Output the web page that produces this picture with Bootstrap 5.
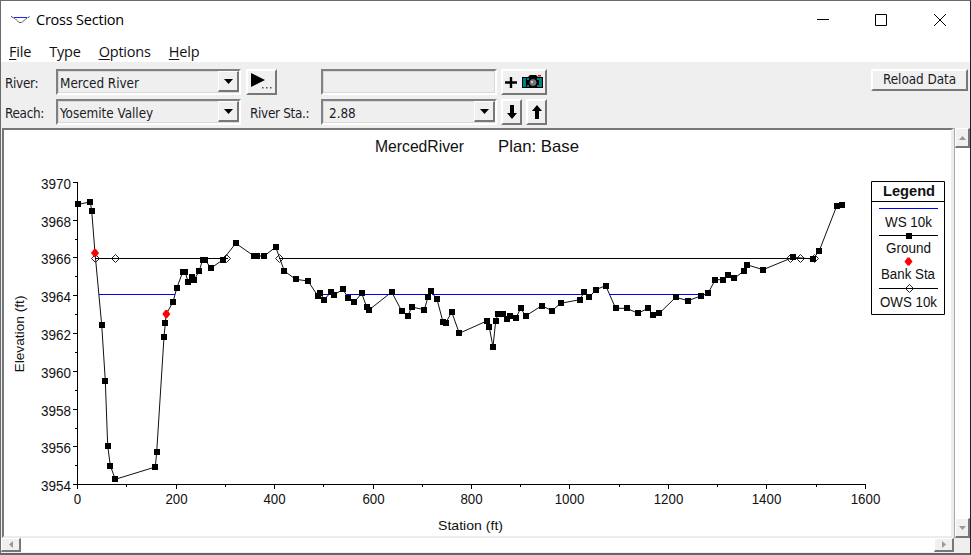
<!DOCTYPE html>
<html lang="en">
<head>
<meta charset="utf-8">
<title>Cross Section</title>
<meta name="viewport" content="width=device-width, initial-scale=1">
<link href="https://cdn.jsdelivr.net/npm/bootstrap@5.3.0/dist/css/bootstrap.min.css" rel="stylesheet">
<style>
html,body{height:100%;margin:0;overflow:hidden}
body{font-family:"Open Sans","Noto Sans",sans-serif;color:#000;background:#efefef}
.win{width:971px;height:555px;border:1px solid #6b6b6b;border-right-color:#222;border-bottom:2px solid #666;background:#efefef}
.titlebar{height:37px;padding-left:10px;font-size:14.5px;letter-spacing:-.22px}
.titlebar svg{display:block}
.caption-text{margin-left:6px}
.winbtns{margin-right:18px}
.menubar{height:24px;padding:0 9px 0 8px;font-size:14.5px;letter-spacing:-.2px;line-height:27px}
.menubar a{color:#111;text-decoration:none;margin-right:18px}
.menubar u{text-underline-offset:2px;text-decoration-thickness:1px}
.tools{height:66px;padding:7px 2px 0 4px;font-family:"DejaVu Sans Condensed","DejaVu Sans",sans-serif;font-stretch:condensed;font-size:13.4px;letter-spacing:-.3px;color:#1b1b28}
.toolgrid{display:grid;grid-template-columns:51px 185px 80px 176px 51px;grid-template-rows:26px 26px;row-gap:4px;column-gap:0}
.field{height:26px;border:2px solid;border-color:#808080 #fff #fff #808080;box-shadow:inset 0 0 0 1px #d9d9d9;padding-left:2px;line-height:25px;letter-spacing:-.02px}
.bevel{background:#f0f0f0;border:2px solid;border-color:#fff #777 #777 #fff;color:#000;padding:0;border-radius:0;display:flex;align-items:center;justify-content:center}
.drop{width:21px;height:21px;border-width:1px 2px 2px 1px}
.next-btn{width:31px;height:26px;margin-left:5px}
.cam-btn{width:46px;height:26px;margin-left:4px}
.arr-btn{width:21px;height:26px}
.reload-btn{width:97px;height:22px;color:#1b1b28;letter-spacing:-.05px}
.tools .lbl{line-height:29px;white-space:nowrap}
.sta{padding-left:9px}
.view{height:424px}
.plot{width:952px;height:410px;background:#fff;border-left:2px solid #777;border-top:2px solid #777;border-bottom:2px solid #ececec;border-right:3px solid #ececec;margin-left:1px}
.plot svg{display:block;font-family:"Liberation Sans",Arial,sans-serif}
.vbar{width:16px;height:410px;background:#fff;border-left:1px solid #aaa}
.hbar{width:953px;height:14px;background:#fff}
.sb{width:15px;height:20px;border-width:1px 2px 2px 1px}
.sbh{width:20px;height:14px;border-width:1px 2px 2px 1px}
</style>
</head>
<body>
<div class="win d-flex flex-column">
  <header class="titlebar bg-white d-flex align-items-center">
    <svg width="19" height="8" viewBox="0 0 19 8" fill="none"><path d="M0 .5 4 2.500 8 6.500h3L15 2.500 19 .5" stroke="#333" stroke-dasharray="2 .6"/><path d="M3 1.500H16" stroke="#22f" stroke-width="1"/></svg>
    <span class="caption-text">Cross Section</span>
    <svg class="winbtns ms-auto" width="136" height="14" viewBox="0 0 136 14" fill="none" stroke="#000"><path d="M1 6.500H13M59.500 1.500h11v11h-11zM118 1 130 13M130 1 118 13"/></svg>
  </header>
  <nav class="menubar bg-white d-flex">
    <a href="#"><u>F</u>ile</a><a href="#">Type</a><a href="#"><u>O</u>ptions</a><a href="#"><u>H</u>elp</a>
  </nav>
  <section class="tools d-flex justify-content-between align-items-start">
    <div class="toolgrid">
      <span class="lbl">River:</span>
      <div class="field d-flex justify-content-between"><span>Merced River</span><button class="bevel drop"><svg width="9" height="5"><path d="M0 0h9L4.500 5z"/></svg></button></div>
      <button class="bevel next-btn"><svg width="24" height="20"><path d="M1 1 15 8 1 15z"/><path d="M12 15h1.500v1.500H12zM16 15h1.500v1.500H16zM20 15h1.500v1.500H20z" fill="#555"/></svg></button>
      <div class="field"></div>
      <button class="bevel cam-btn"><svg width="40" height="18" viewBox="0 0 40 18"><path d="M1 9.500H13M7 4v11" stroke="#000" stroke-width="2.400"/><path d="M18 4h6l2-2h6l2 2h5v11H18z" fill="#000"/><path d="M19 5h3v9h-3zM35 5h3v9h-3z" fill="#008080"/><path d="M23 5h2v2h-2zM33 5h2v2h-2zM23 12h2v2h-2zM33 12h2v2h-2z" fill="#008080"/><circle cx="29" cy="9.500" r="4" fill="#777" stroke="#000"/><path d="M27 8h2v2h-2z" fill="#ccc"/><path d="M34 2h3v1.500h-3z" fill="#e00"/></svg></button>
      <span class="lbl">Reach:</span>
      <div class="field d-flex justify-content-between"><span>Yosemite Valley</span><button class="bevel drop"><svg width="9" height="5"><path d="M0 0h9L4.500 5z"/></svg></button></div>
      <span class="lbl sta">River Sta.:</span>
      <div class="field d-flex justify-content-between"><span class="ps-1">2.88</span><button class="bevel drop"><svg width="9" height="5"><path d="M0 0h9L4.500 5z"/></svg></button></div>
      <div class="d-flex justify-content-between cam-btn"><button class="bevel arr-btn"><svg width="10" height="14"><path d="M3 0h4v8h3L5 14 0 8h3z"/></svg></button><button class="bevel arr-btn"><svg width="10" height="14"><path d="M3 14h4V6h3L5 0 0 6h3z"/></svg></button></div>
    </div>
    <button class="bevel reload-btn">Reload Data</button>
  </section>
  <main class="view">
    <div class="d-flex">
      <div class="plot"><svg id="chart" width="947" height="406" viewBox="4 130 947 406"></svg></div>
      <div class="vbar d-flex flex-column justify-content-between">
        <button class="bevel sb"><svg width="7" height="4"><path d="M0 4h7L3.500 0z" fill="#999"/></svg></button>
        <button class="bevel sb"><svg width="7" height="4"><path d="M0 0h7L3.500 4z" fill="#999"/></svg></button>
      </div>
    </div>
    <div class="hbar d-flex justify-content-between">
      <button class="bevel sbh"><svg width="4" height="7"><path d="M4 0v7L0 3.500z" fill="#999"/></svg></button>
      <button class="bevel sbh"><svg width="4" height="7"><path d="M0 0v7L4 3.500z" fill="#999"/></svg></button>
    </div>
  </main>
</div>
<script src="https://cdn.jsdelivr.net/npm/bootstrap@5.3.0/dist/js/bootstrap.bundle.min.js"></script>
<script>
const ground=[[78,204.3],[90.3,202],[91.7,210.7],[95,253,1],[101.7,324.7],[105.3,380.7],[107.7,445.7],[110.3,465.7],[115.3,479.3],[155.3,467],[156.7,452],[164,337],[165.3,323],[166.3,314,1],[173,302],[176.7,288.3],[182.7,272],[185.3,272],[188,282],[191.7,277],[194.3,279.7],[199.3,270.7],[202.7,259.7],[205.3,259.7],[210.7,268.3],[223,259.7],[235.7,243.3],[254,256],[256.7,256],[264.3,256],[275.7,247],[284.3,271],[295.7,279.3],[308,281],[317.7,295.7],[320.3,293.3],[324.3,299.7],[330.7,292.3],[334.3,294.7],[343,289.3],[348,298],[354.3,302],[361.7,293.3],[366.7,307],[369.3,309.7],[391.7,292],[401.7,311],[408,315.7],[411.7,307],[424.3,309.7],[428,297],[430.7,291],[437,299.3],[443,322],[445.7,323],[451.7,312],[459.3,333.3],[486.7,321],[489.3,327.3],[493,347],[495.7,320.7],[498,314.3],[500.3,313.7],[503,314.3],[506.7,319.3],[510.3,316],[515.7,318.3],[520.7,308.3],[525.7,316],[541.7,305.7],[552,310.7],[560.7,303.3],[579.7,299.7],[584.3,292],[589.3,297.3],[595.7,289.7],[605.7,285.7],[615.7,308.3],[626.7,308.3],[638,313.3],[648,308.3],[653,314.7],[659.3,313.3],[675.7,297.3],[688,300.7],[700.7,296],[708,293.3],[715.3,279.7],[723,279.7],[728,274.7],[734.3,278.3],[744.3,270.7],[746.7,264.7],[763,269.7],[793,257.3],[813,259],[819.3,250.7],[836.7,206],[842,204.7]];
const water=[[99,175],[316,335],[346,360],[364,390],[394,429],[432,583],[587,590],[609,705]];
let s='';
const line=(x1,y1,x2,y2,c='#000')=>s+=`<path d="M${x1} ${y1}L${x2} ${y2}" stroke="${c}" shape-rendering="crispEdges"/>`;
const text=(x,y,t,size,len,extra='')=>s+=`<text x="${x}" y="${y}" font-size="${size}" textLength="${len}" lengthAdjust="spacingAndGlyphs" fill="#111" ${extra}>${t}</text>`;
const square=(x,y)=>s+=`<rect x="${Math.round(x-3)}" y="${Math.round(y-3)}" width="6" height="6"/>`;
const diamond=(x,y)=>s+=`<path d="M${x-4} ${y}l4-4 4 4-4 4z" fill="none" stroke="#222"/>`;
const bank=(x,y)=>s+=`<path d="M${x-4} ${y}l3-4h2l3 4-3 4h-2z" fill="#f00"/>`;
text(375,152,'MercedRiver',16.5,89);
text(498,152,'Plan: Base',16.5,81);
line(77.5,182,77.5,485);line(77,484.5,866,484.5);
for(let i=0;i<=16;i++){
  const y=Math.floor(484.7-i*18.9)+.5, x=Math.floor(77.7+i*49.22)+.5;
  line(i%2?75:73,y,77,y);line(x,485,x,i%2?487:489);
  if(i%2===0){
    text(41,y+6,3954+i,14,30);
    const v=String(i*100),w=v.length*7.4;text(x-w/2,504,v,14,w);
  }
}
text(438,530,'Station (ft)',13.5,65);
text(0,0,'Elevation (ft)',13.5,77,'transform="translate(23.500 372.500) rotate(-90)"');
s+=`<polyline points="${ground.map(p=>p[0]+','+p[1]).join(' ')}" fill="none" stroke="#111" stroke-width="1"/>`;
water.forEach(([a,b])=>line(a,294.5,b,294.5,'#0000f0'));
line(95,258.5,228,258.5);line(279,258.5,815,258.5);
[95.5,115.5,226.5,279.5,790.5,800.5,814.5].forEach(x=>diamond(x,258.5));
ground.forEach(([x,y,b])=>b||square(x,y));
ground.forEach(([x,y,b])=>b&&bank(x,y));
s+='<path d="M871.500 181.500h73v133h-73zM871.500 201.500h73" fill="none" stroke="#000"/>';
text(883,195.5,'Legend',14,52,'font-weight="bold"');
line(879,208.5,938,208.5,'#0000f0');
text(885,227,'WS 10k',14,47);
line(879,235.5,938,235.5);square(909,236);
text(886,253,'Ground',14,45);
bank(908.5,261.5);
text(881,279,'Bank Sta',14,54);
line(879,288.5,938,288.5);diamond(909.5,288.5);
text(880,306.5,'OWS 10k',14,57);
document.getElementById('chart').innerHTML=s;
</script>
</body>
</html>
